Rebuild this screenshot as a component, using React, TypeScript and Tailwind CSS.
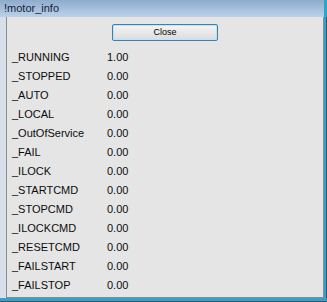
import React from "react";

const rows: [string, string][] = [
  ["_RUNNING", "1.00"],
  ["_STOPPED", "0.00"],
  ["_AUTO", "0.00"],
  ["_LOCAL", "0.00"],
  ["_OutOfService", "0.00"],
  ["_FAIL", "0.00"],
  ["_ILOCK", "0.00"],
  ["_STARTCMD", "0.00"],
  ["_STOPCMD", "0.00"],
  ["_ILOCKCMD", "0.00"],
  ["_RESETCMD", "0.00"],
  ["_FAILSTART", "0.00"],
  ["_FAILSTOP", "0.00"],
];

export default function App() {
  return (
    <div className="w-[327px] h-[302px] flex flex-col bg-[#e4e4e4] font-['Liberation_Sans',Arial,sans-serif] overflow-hidden">
      <div className="h-[17px] shrink-0 flex items-center pl-[4px] bg-gradient-to-b from-[#8fabcc] to-[#bad2eb] border-r-[3px] border-[#3b9ec4]">
        <span className="text-[11px] leading-none text-[#14243c]">!motor_info</span>
      </div>
      <div className="flex-1 flex min-h-0">
        <div className="w-[6px] shrink-0 bg-[#d8dfe8]" />
        <div className="flex-1 flex flex-col border-l border-b border-r border-[#8c8c8c] bg-[#e5e5e5]">
          <div className="flex justify-center pt-[7px]">
            <button className="w-[106px] h-[17px] rounded-[2px] border border-[#3c7fb1] bg-gradient-to-b from-[#f5f5f5] to-[#dcdcdc] text-[9px] text-black leading-none shadow-[inset_0_0_0_1px_#bfe4f9]">
              Close
            </button>
          </div>
          <div className="flex flex-col pt-[7px] pl-[5px]">
            {rows.map(([k, v]) => (
              <div key={k} className="flex h-[19px] items-center text-[11px] text-[#0c0c0c]">
                <span className="w-[95px]">{k}</span>
                <span>{v}</span>
              </div>
            ))}
          </div>
        </div>
        <div className="w-[3px] shrink-0 bg-[#3b9ec4] border-r border-[#2a5a78]" />
      </div>
      <div className="h-[4px] shrink-0 bg-[#3b9ec4] border-b border-[#2a5a78]" />
    </div>
  );
}
